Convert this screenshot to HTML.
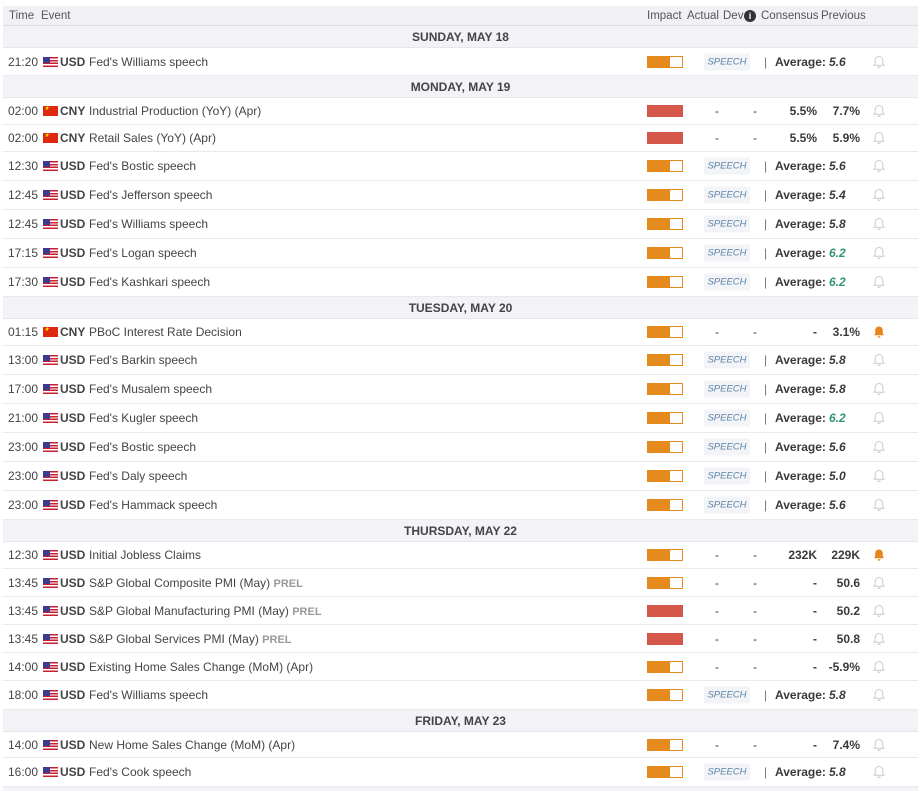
<!DOCTYPE html>
<html><head><meta charset="utf-8"><style>
*{margin:0;padding:0;box-sizing:border-box}
body{width:923px;height:791px;background:#fff;font-family:"Liberation Sans",Arial,sans-serif;font-size:12px;color:#3a3a3a;position:relative;overflow:hidden}
.hd{position:absolute;left:3px;top:6px;width:915px;height:20px;background:#f1f1f5;border-bottom:1px solid #dcdce2;color:#555;font-size:11.5px;line-height:20px}
.hd span{position:absolute}
.d{position:absolute;left:3px;width:915px;background:#f2f2f7;text-align:center;font-weight:bold;font-size:12px;color:#444;border-bottom:1px solid #e6e6ec}
.r{position:absolute;left:3px;width:915px;border-bottom:1px solid #e8e8ed;background:#fff}
.r>*{position:absolute;top:50%;transform:translateY(-50%);white-space:nowrap}
.t{left:5px;color:#444}
.f{left:40px;width:15px;height:10px}
.us{background:linear-gradient(#3c3b8e,#3c3b8e) 0 0/7px 6px no-repeat,repeating-linear-gradient(#c8202f 0 1.43px,#fff 1.43px 2.86px)}
.cn{background:#de2910;color:#ffde00;font-size:6px;line-height:7px;padding-left:1px}
.c{left:57px;font-weight:bold;color:#444}
.e{left:86px;color:#444}
.p{color:#999;font-weight:bold;font-size:11px}
.b{left:644px;width:36px;height:12px;border:1px solid #e58a1c;background:linear-gradient(90deg,#e58a1c 22px,#fff 22px)}
.b.h{background:#d5574a;border-color:#d5574a}
.a{left:712px}.v{left:750px}
.cs{right:101px;font-weight:bold}
.pv{right:58px;font-weight:bold}
.sp{left:701px;width:46px;height:17px;background:#f2f4f7;color:#5f84a8;font-style:italic;font-size:9.5px;line-height:17px;text-align:center}
.bar{left:761px;color:#777}
.av{left:772px;font-weight:bold}
.val{left:826px;font-weight:bold;font-style:italic}
.g{color:#2f9478}
.bl{left:869px;width:14px;height:14px}
</style></head><body>
<div class="hd"><span style="left:6px">Time</span><span style="left:38px">Event</span><span style="left:644px">Impact</span><span style="left:684px">Actual</span><span style="left:720px">Dev</span><span style="left:741px;top:4px;width:12px;height:12px;border-radius:50%;background:#333;color:#fff;font-size:9px;line-height:12px;text-align:center;font-weight:bold">i</span><span style="left:758px">Consensus</span><span style="left:818px">Previous</span></div>

<svg width="0" height="0" style="position:absolute"><defs>
<symbol id="bell" viewBox="0 0 14 14"><path d="M7 1.5c-2.3 0-3.8 1.8-3.8 4v3L2 10.3h10L10.8 8.5v-3c0-2.2-1.5-4-3.8-4zM5.8 11.3a1.2 1.2 0 0 0 2.4 0" fill="none" stroke="#ccc" stroke-width="1"/></symbol>
<symbol id="bello" viewBox="0 0 14 14"><path d="M7 1.5c-2.3 0-3.8 1.8-3.8 4v3L2 10.3h10L10.8 8.5v-3c0-2.2-1.5-4-3.8-4zM5.6 11.3a1.4 1.4 0 0 0 2.8 0z" fill="#e8861b"/></symbol>
</defs></svg>

<div class="d" style="top:26px;height:22px;line-height:22px">SUNDAY, MAY 18</div>
<div class="r" style="top:48px;height:28px"><span class="t">21:20</span><i class="f us"></i><b class="c">USD</b><span class="e">Fed's Williams speech</span><i class="b"></i><span class="sp">SPEECH</span><span class="bar">|</span><span class="av">Average:</span><span class="val">5.6</span><svg class="bl"><use href="#bell"/></svg></div>

<div class="d" style="top:76px;height:22px;line-height:22px">MONDAY, MAY 19</div>
<div class="r" style="top:98px;height:27px"><span class="t">02:00</span><i class="f cn">★</i><b class="c">CNY</b><span class="e">Industrial Production (YoY) (Apr)</span><i class="b h"></i><span class="a">-</span><span class="v">-</span><span class="cs">5.5%</span><span class="pv">7.7%</span><svg class="bl"><use href="#bell"/></svg></div>
<div class="r" style="top:125px;height:27px"><span class="t">02:00</span><i class="f cn">★</i><b class="c">CNY</b><span class="e">Retail Sales (YoY) (Apr)</span><i class="b h"></i><span class="a">-</span><span class="v">-</span><span class="cs">5.5%</span><span class="pv">5.9%</span><svg class="bl"><use href="#bell"/></svg></div>
<div class="r" style="top:152px;height:29px"><span class="t">12:30</span><i class="f us"></i><b class="c">USD</b><span class="e">Fed's Bostic speech</span><i class="b"></i><span class="sp">SPEECH</span><span class="bar">|</span><span class="av">Average:</span><span class="val">5.6</span><svg class="bl"><use href="#bell"/></svg></div>
<div class="r" style="top:181px;height:29px"><span class="t">12:45</span><i class="f us"></i><b class="c">USD</b><span class="e">Fed's Jefferson speech</span><i class="b"></i><span class="sp">SPEECH</span><span class="bar">|</span><span class="av">Average:</span><span class="val">5.4</span><svg class="bl"><use href="#bell"/></svg></div>
<div class="r" style="top:210px;height:29px"><span class="t">12:45</span><i class="f us"></i><b class="c">USD</b><span class="e">Fed's Williams speech</span><i class="b"></i><span class="sp">SPEECH</span><span class="bar">|</span><span class="av">Average:</span><span class="val">5.8</span><svg class="bl"><use href="#bell"/></svg></div>
<div class="r" style="top:239px;height:29px"><span class="t">17:15</span><i class="f us"></i><b class="c">USD</b><span class="e">Fed's Logan speech</span><i class="b"></i><span class="sp">SPEECH</span><span class="bar">|</span><span class="av">Average:</span><span class="val g">6.2</span><svg class="bl"><use href="#bell"/></svg></div>
<div class="r" style="top:268px;height:29px"><span class="t">17:30</span><i class="f us"></i><b class="c">USD</b><span class="e">Fed's Kashkari speech</span><i class="b"></i><span class="sp">SPEECH</span><span class="bar">|</span><span class="av">Average:</span><span class="val g">6.2</span><svg class="bl"><use href="#bell"/></svg></div>

<div class="d" style="top:297px;height:22px;line-height:22px">TUESDAY, MAY 20</div>
<div class="r" style="top:319px;height:27px"><span class="t">01:15</span><i class="f cn">★</i><b class="c">CNY</b><span class="e">PBoC Interest Rate Decision</span><i class="b"></i><span class="a">-</span><span class="v">-</span><span class="cs">-</span><span class="pv">3.1%</span><svg class="bl"><use href="#bello"/></svg></div>
<div class="r" style="top:346px;height:29px"><span class="t">13:00</span><i class="f us"></i><b class="c">USD</b><span class="e">Fed's Barkin speech</span><i class="b"></i><span class="sp">SPEECH</span><span class="bar">|</span><span class="av">Average:</span><span class="val">5.8</span><svg class="bl"><use href="#bell"/></svg></div>
<div class="r" style="top:375px;height:29px"><span class="t">17:00</span><i class="f us"></i><b class="c">USD</b><span class="e">Fed's Musalem speech</span><i class="b"></i><span class="sp">SPEECH</span><span class="bar">|</span><span class="av">Average:</span><span class="val">5.8</span><svg class="bl"><use href="#bell"/></svg></div>
<div class="r" style="top:404px;height:29px"><span class="t">21:00</span><i class="f us"></i><b class="c">USD</b><span class="e">Fed's Kugler speech</span><i class="b"></i><span class="sp">SPEECH</span><span class="bar">|</span><span class="av">Average:</span><span class="val g">6.2</span><svg class="bl"><use href="#bell"/></svg></div>
<div class="r" style="top:433px;height:29px"><span class="t">23:00</span><i class="f us"></i><b class="c">USD</b><span class="e">Fed's Bostic speech</span><i class="b"></i><span class="sp">SPEECH</span><span class="bar">|</span><span class="av">Average:</span><span class="val">5.6</span><svg class="bl"><use href="#bell"/></svg></div>
<div class="r" style="top:462px;height:29px"><span class="t">23:00</span><i class="f us"></i><b class="c">USD</b><span class="e">Fed's Daly speech</span><i class="b"></i><span class="sp">SPEECH</span><span class="bar">|</span><span class="av">Average:</span><span class="val">5.0</span><svg class="bl"><use href="#bell"/></svg></div>
<div class="r" style="top:491px;height:29px"><span class="t">23:00</span><i class="f us"></i><b class="c">USD</b><span class="e">Fed's Hammack speech</span><i class="b"></i><span class="sp">SPEECH</span><span class="bar">|</span><span class="av">Average:</span><span class="val">5.6</span><svg class="bl"><use href="#bell"/></svg></div>

<div class="d" style="top:520px;height:22px;line-height:22px">THURSDAY, MAY 22</div>
<div class="r" style="top:542px;height:27px"><span class="t">12:30</span><i class="f us"></i><b class="c">USD</b><span class="e">Initial Jobless Claims</span><i class="b"></i><span class="a">-</span><span class="v">-</span><span class="cs">232K</span><span class="pv">229K</span><svg class="bl"><use href="#bello"/></svg></div>
<div class="r" style="top:569px;height:28px"><span class="t">13:45</span><i class="f us"></i><b class="c">USD</b><span class="e">S&amp;P Global Composite PMI (May) <span class="p">PREL</span></span><i class="b"></i><span class="a">-</span><span class="v">-</span><span class="cs">-</span><span class="pv">50.6</span><svg class="bl"><use href="#bell"/></svg></div>
<div class="r" style="top:597px;height:28px"><span class="t">13:45</span><i class="f us"></i><b class="c">USD</b><span class="e">S&amp;P Global Manufacturing PMI (May) <span class="p">PREL</span></span><i class="b h"></i><span class="a">-</span><span class="v">-</span><span class="cs">-</span><span class="pv">50.2</span><svg class="bl"><use href="#bell"/></svg></div>
<div class="r" style="top:625px;height:28px"><span class="t">13:45</span><i class="f us"></i><b class="c">USD</b><span class="e">S&amp;P Global Services PMI (May) <span class="p">PREL</span></span><i class="b h"></i><span class="a">-</span><span class="v">-</span><span class="cs">-</span><span class="pv">50.8</span><svg class="bl"><use href="#bell"/></svg></div>
<div class="r" style="top:653px;height:28px"><span class="t">14:00</span><i class="f us"></i><b class="c">USD</b><span class="e">Existing Home Sales Change (MoM) (Apr)</span><i class="b"></i><span class="a">-</span><span class="v">-</span><span class="cs">-</span><span class="pv">-5.9%</span><svg class="bl"><use href="#bell"/></svg></div>
<div class="r" style="top:681px;height:29px"><span class="t">18:00</span><i class="f us"></i><b class="c">USD</b><span class="e">Fed's Williams speech</span><i class="b"></i><span class="sp">SPEECH</span><span class="bar">|</span><span class="av">Average:</span><span class="val">5.8</span><svg class="bl"><use href="#bell"/></svg></div>

<div class="d" style="top:710px;height:22px;line-height:22px">FRIDAY, MAY 23</div>
<div class="r" style="top:732px;height:26px"><span class="t">14:00</span><i class="f us"></i><b class="c">USD</b><span class="e">New Home Sales Change (MoM) (Apr)</span><i class="b"></i><span class="a">-</span><span class="v">-</span><span class="cs">-</span><span class="pv">7.4%</span><svg class="bl"><use href="#bell"/></svg></div>
<div class="r" style="top:758px;height:29px"><span class="t">16:00</span><i class="f us"></i><b class="c">USD</b><span class="e">Fed's Cook speech</span><i class="b"></i><span class="sp">SPEECH</span><span class="bar">|</span><span class="av">Average:</span><span class="val">5.8</span><svg class="bl"><use href="#bell"/></svg></div>
<div style="position:absolute;left:3px;top:787px;width:915px;height:4px;background:#f2f2f7"></div>
</body></html>
